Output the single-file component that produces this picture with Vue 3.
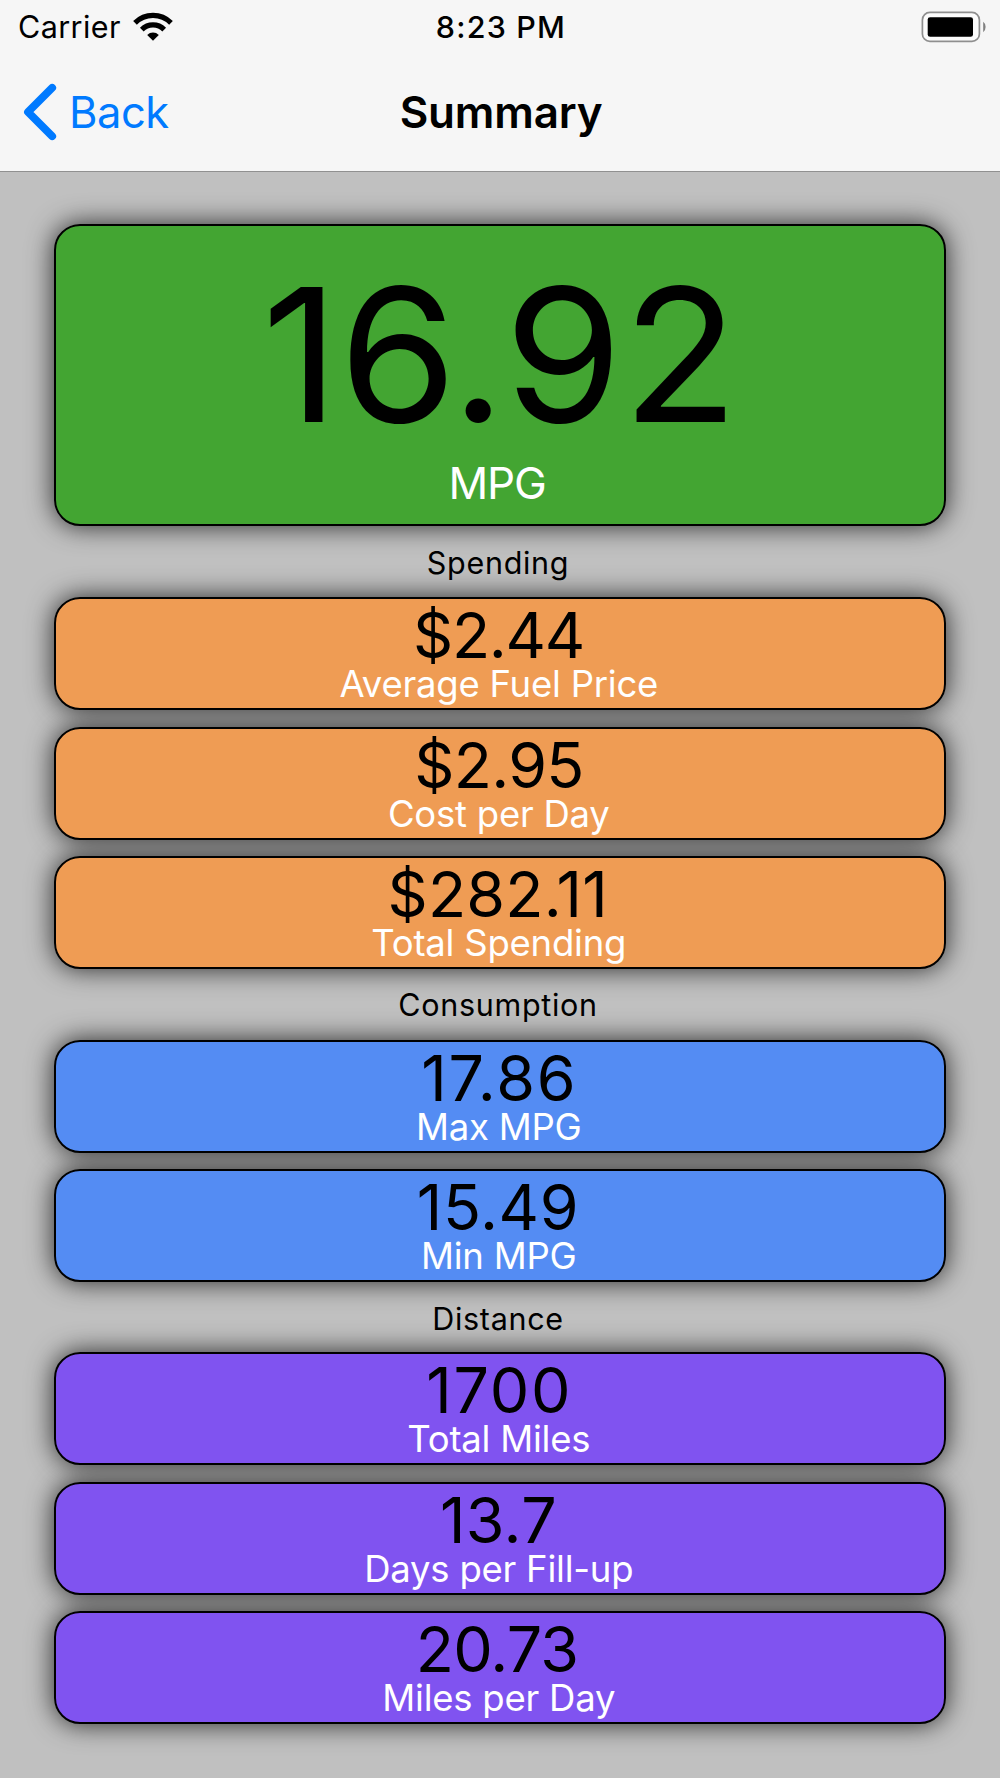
<script setup>
const groups = [
  {
    title: 'Spending',
    color: 'orange',
    stats: [
      { value: '$2.44', label: 'Average Fuel Price', tracking: -1.3, indent: -3 },
      { value: '$2.95', label: 'Cost per Day', tracking: -0.7, indent: -2 },
      { value: '$282.11', label: 'Total Spending', tracking: 0.2, indent: -4.5 },
    ],
  },
  {
    title: 'Consumption',
    color: 'blue',
    stats: [
      { value: '17.86', label: 'Max MPG', tracking: 1.7, indent: -1.5 },
      { value: '15.49', label: 'Min MPG', tracking: 0.6, indent: -4 },
    ],
  },
  {
    title: 'Distance',
    color: 'purple',
    stats: [
      { value: '1700', label: 'Total Miles', tracking: 1.7, indent: -1.5 },
      { value: '13.7', label: 'Days per Fill-up', tracking: 0.4, indent: -3 },
      { value: '20.73', label: 'Miles per Day', tracking: -0.8, indent: -6 },
    ],
  },
]
</script>

<template>
  <div class="screen">
    <header class="header">
      <div class="status-bar">
        <div class="carrier">
          <span>Carrier</span>
          <svg class="wifi" width="40" height="30" viewBox="0 0 40 30">
            <path d="M20 28.8 L14.2 23 A8.2 8.2 0 0 1 25.8 23 Z" />
            <path class="arc" d="M8.8 17.6 A15.8 15.8 0 0 1 31.2 17.6" />
            <path class="arc" d="M2 10.8 A25.4 25.4 0 0 1 38 10.8" />
          </svg>
        </div>
        <div class="time">8:23 PM</div>
        <svg class="battery" width="66" height="32" viewBox="0 0 66 32">
          <rect x="1.4" y="1.4" width="57" height="29" rx="7.5" fill="#fcfcfc" stroke="#8f8f8f" stroke-width="1.7" />
          <rect x="6.7" y="6.2" width="45.3" height="19.6" rx="2.4" fill="#000" />
          <path d="M62.2 10.8 Q64.6 12.5 64.6 16 Q64.6 19.5 62.2 21.2 Z" fill="#808080" />
        </svg>
      </div>
      <nav class="nav-bar">
        <a class="back">
          <svg width="34" height="58" viewBox="0 0 34 58">
            <path d="M29.2 4.8 L5 29 L29.2 53.2" />
          </svg>
          <span>Back</span>
        </a>
        <h1 class="title">Summary</h1>
      </nav>
    </header>

    <main class="content">
      <section class="card hero green">
        <div class="value">16.92</div>
        <div class="label">MPG</div>
      </section>

      <section v-for="group in groups" :key="group.title" class="group" :class="group.color + '-group'">
        <h2 class="group-title">{{ group.title }}</h2>
        <div class="stats">
          <div v-for="stat in group.stats" :key="stat.label" class="card stat" :class="group.color">
            <div class="value" :style="{ letterSpacing: stat.tracking + 'px', textIndent: stat.indent + 'px' }">
              {{ stat.value }}
            </div>
            <div class="label">{{ stat.label }}</div>
          </div>
        </div>
      </section>
    </main>
  </div>
</template>

<style>
body {
  margin: 0;
}
</style>

<style scoped>
.screen {
  width: 1000px;
  height: 1778px;
  overflow: hidden;
  isolation: isolate;
  background: #c0c0c0;
  color: #000;
  font-family: Inter, 'Liberation Sans', sans-serif;
  font-weight: 400;
}

.header {
  box-sizing: border-box;
  height: 172px;
  border-bottom: 1px solid #909090;
  background: #f6f6f6;
}

.status-bar {
  display: grid;
  grid-template-columns: 1fr auto 1fr;
  align-items: center;
  height: 52px;
  padding: 0 13px 0 18px;
  font-size: 30.5px;
}

.carrier {
  display: flex;
  align-items: center;
  gap: 12px;
  line-height: 54px;
  letter-spacing: 0.4px;
}

.wifi .arc {
  fill: none;
  stroke: #000;
  stroke-width: 5.2;
}

.time {
  margin-right: 3px;
  font-weight: 500;
  line-height: 54px;
  letter-spacing: 1.2px;
}

.battery {
  justify-self: end;
}

.nav-bar {
  display: grid;
  grid-template-columns: 1fr auto 1fr;
  align-items: center;
  height: 119px;
  padding: 0 21px 0 23px;
}

.back {
  display: flex;
  align-items: center;
  gap: 12px;
  color: #007aff;
  font-size: 43.5px;
  letter-spacing: -0.5px;
}

.back path {
  fill: none;
  stroke: #007aff;
  stroke-width: 7.8;
  stroke-linecap: round;
  stroke-linejoin: round;
}

.title {
  margin: 0;
  font-size: 44px;
  font-weight: 600;
  letter-spacing: -0.2px;
}

.content {
  padding: 52px 54px 0;
  text-align: center;
}

.card {
  position: relative;
  box-sizing: border-box;
  border: 2px solid #000;
  border-radius: 26px;
}

.card::before {
  content: '';
  position: absolute;
  inset: -2px;
  z-index: -1;
  border-radius: 26px;
  box-shadow: 0 0 27px rgba(0, 0, 0, 0.8);
}

.green {
  background: #43a532;
}

.orange {
  background: #ef9c54;
}

.blue {
  background: #548cf3;
}

.purple {
  background: #8053f0;
}

.label {
  color: #fff;
}

.hero {
  height: 302px;
  padding-top: 36px;
}

.hero .value {
  font-size: 185.7px;
  line-height: 186px;
  transform: scaleX(1.025);
}

.hero .label {
  margin-top: 11px;
  font-size: 44px;
  line-height: 49px;
  letter-spacing: -1.2px;
  text-indent: -6px;
}

.group-title {
  box-sizing: border-box;
  height: 71px;
  margin: 0;
  padding-top: 1px;
  font-size: 30.5px;
  font-weight: 400;
  line-height: 71px;
  letter-spacing: 0.7px;
  text-indent: -4px;
}

.stats {
  display: flex;
  flex-direction: column;
  gap: 16.5px;
}

.stat {
  height: 113px;
  padding-top: 6px;
}

.stat .value {
  font-size: 62.7px;
  line-height: 60px;
}

.stat .label {
  font-size: 36.5px;
  line-height: 38px;
  letter-spacing: -0.23px;
  text-indent: -2.5px;
}

.blue-group .group-title {
  padding-top: 0;
}

.blue-group .stats {
  gap: 16px;
}

.purple-group .stats {
  gap: 16.7px;
}

.purple-group .group-title {
  height: 70px;
}
</style>
